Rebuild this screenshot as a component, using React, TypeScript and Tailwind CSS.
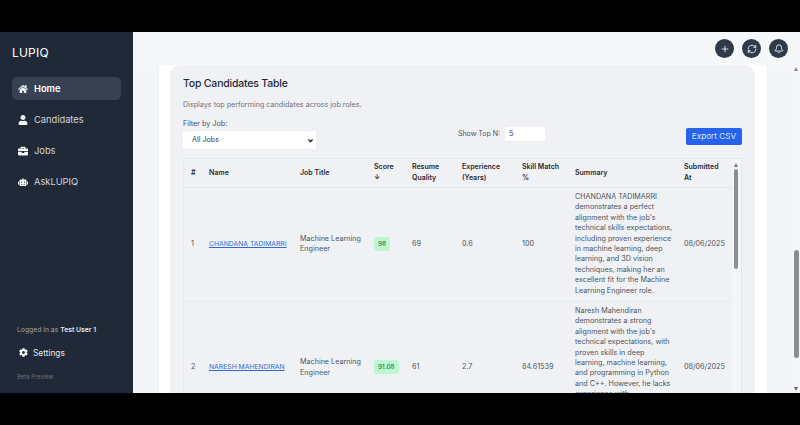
import { Plus, RefreshCw, Bell } from "lucide-react";
import { FaHome, FaUser, FaBriefcase, FaRobot, FaCog } from "react-icons/fa";

const nav = [
  { label: "Home", Icon: FaHome, active: true },
  { label: "Candidates", Icon: FaUser },
  { label: "Jobs", Icon: FaBriefcase },
  { label: "AskLUPIQ", Icon: FaRobot },
];

const columns = [
  { lines: ["#"], w: "w-[18px]" },
  { lines: ["Name"], w: "w-[91px]" },
  { lines: ["Job Title"], w: "w-[74px]" },
  { lines: ["Score", "↓"], w: "w-[38px]" },
  { lines: ["Resume", "Quality"], w: "w-[50px]" },
  { lines: ["Experience", "(Years)"], w: "w-[60px]" },
  { lines: ["Skill Match", "%"], w: "w-[53px]" },
  { lines: ["Summary"], w: "w-[109px]" },
  { lines: ["Submitted", "At"], w: "w-[56px]" },
];

const rows = [
  {
    n: 1,
    name: "CHANDANA TADIMARRI",
    score: "98",
    rq: "69",
    exp: "0.6",
    skill: "100",
    h: "h-[114px]",
    summary: [
      "CHANDANA TADIMARRI",
      "demonstrates a perfect",
      "alignment with the job's",
      "technical skills expectations,",
      "including proven experience",
      "in machine learning, deep",
      "learning, and 3D vision",
      "techniques, making her an",
      "excellent fit for the Machine",
      "Learning Engineer role.",
    ],
  },
  {
    n: 2,
    name: "NARESH MAHENDIRAN",
    score: "91.08",
    rq: "61",
    exp: "2.7",
    skill: "84.61539",
    h: "h-[133px]",
    summary: [
      "Naresh Mahendiran",
      "demonstrates a strong",
      "alignment with the job's",
      "technical expectations, with",
      "proven skills in deep",
      "learning, machine learning,",
      "and programming in Python",
      "and C++. However, he lacks",
      "experience with",
    ],
  },
];

function RoundBtn({ children }: { children: React.ReactNode }) {
  return (
    <button className="flex h-[19px] w-[19px] items-center justify-center rounded-full bg-[#2f3a4a] text-white">
      {children}
    </button>
  );
}

export default function App() {
  return (
    <div className="flex h-[425px] w-[800px] flex-col overflow-hidden bg-black font-['Inter',sans-serif]">
      <div className="h-[32px] shrink-0" />
      <div className="flex h-[361px] shrink-0">
        <aside className="flex w-[133px] shrink-0 flex-col bg-[#1f2937] px-3 text-white">
          <div className="pt-[13px] text-[12px] font-normal leading-[15px] tracking-[0.2px]">LUPIQ</div>
          <nav className="mt-[17px] flex flex-col gap-[8.3px]">
            {nav.map(({ label, Icon, active }) => (
              <div
                key={label}
                className={`flex h-[23px] items-center gap-[6px] rounded-[5px] pl-[6px] text-[9.3px] ${
                  active ? "bg-[#374151] font-semibold text-white" : "text-[#d1d5db]"
                }`}
              >
                <Icon className="h-[10px] w-[10px] text-[#f3f4f6]" />
                <span>{label}</span>
              </div>
            ))}
          </nav>
          <div className="mt-auto pb-[12px] pl-[5px]">
            <div className="text-[6.8px] leading-[10px] text-[#9ca3af]">
              Logged in as <span className="font-semibold text-[#e5e7eb]">Test User 1</span>
            </div>
            <div className="mt-[12px] flex items-center gap-[5px] pl-[2px] text-[8.3px] text-[#e5e7eb]">
              <FaCog className="h-[9px] w-[9px] text-white" />
              <span>Settings</span>
            </div>
            <div className="mt-[13px] text-[5.9px] leading-[9px] text-[#6b7280]">Beta Preview</div>
          </div>
        </aside>
        <main className="flex min-w-0 flex-1 flex-col bg-[#f3f4f6]">
          <header className="flex h-[33px] shrink-0 items-center justify-end gap-[8px] bg-[#f6f7f9] pr-[12px]">
            <RoundBtn><Plus className="h-[10px] w-[10px]" /></RoundBtn>
            <RoundBtn><RefreshCw className="h-[10px] w-[10px]" /></RoundBtn>
            <RoundBtn><Bell className="h-[10px] w-[10px]" /></RoundBtn>
          </header>
          <div className="relative flex min-h-0 flex-1 overflow-hidden bg-[#f4f5f8] pl-[25px] pr-[32px]">
            <div className="flex-1 rounded-t-[4px] border-x border-[#eceef1] bg-white pl-[11px] pr-[12px]">
              <section className="h-full rounded-t-[10px] bg-[#f0f1f4] px-[13px] pt-[11px]">
                <h2 className="text-[10.5px] font-medium leading-[15px] tracking-[-0.2px] text-[#1f2937]">Top Candidates Table</h2>
                <p className="mt-[9px] text-[7.2px] leading-[10px] text-[#6b7280]">
                  Displays top performing candidates across job roles.
                </p>
                <div className="mt-[9px] flex items-start justify-between">
                  <div className="w-[133px]">
                    <label className="block text-[7.2px] leading-[10px] text-[#4b5563]">Filter by Job:</label>
                    <div className="mt-[2px] flex h-[18px] items-center justify-between rounded-[2px] bg-white pl-[9px] pr-[2px] text-[7.2px] text-[#374151]">
                      <span>All Jobs</span>
                      <svg viewBox="0 0 10 10" className="h-[7px] w-[7px]" fill="none" stroke="#222" strokeWidth="1.8">
                        <path d="M2 3.5 5 6.5 8 3.5" />
                      </svg>
                    </div>
                  </div>
                  <div className="flex items-center gap-[5px] pl-[1px] pt-[8px]">
                    <span className="text-[7px] text-[#4b5563]">Show Top N:</span>
                    <div className="flex h-[14px] w-[40px] items-center rounded-[2px] bg-white pl-[4px] text-[7.2px] text-[#374151]">5</div>
                  </div>
                  <button className="mt-[9px] flex h-[17px] w-[56px] items-center justify-center rounded-[2px] bg-[#2563eb] text-[8.2px] text-[#dbe6ff]">
                    Export CSV
                  </button>
                </div>
                <div className="relative mt-[9px] h-[236px] overflow-hidden border-x border-t border-[#e5e7eb]">
                  <table className="w-[549px] table-fixed border-collapse text-left text-[7.2px] leading-[10.4px]">
                    <colgroup>
                      {columns.map((c) => (
                        <col key={c.lines.join(" ")} className={c.w} />
                      ))}
                    </colgroup>
                    <thead>
                      <tr className="h-[28px] border-b border-[#e5e7eb] text-[#1f2937]">
                        {columns.map((c) => (
                          <th key={c.lines.join(" ")} className="whitespace-nowrap pl-[7px] text-[7px] font-semibold">
                            {c.lines.map((line) => (
                              <div key={line}>{line}</div>
                            ))}
                          </th>
                        ))}
                      </tr>
                    </thead>
                    <tbody className="text-[#4b5563]">
                      {rows.map((r) => (
                        <tr key={r.n} className={`${r.h} border-b border-[#e8eaee]`}>
                          <td className="pl-[7px]">{r.n}</td>
                          <td className="whitespace-nowrap pl-[7px] text-[6.8px] text-[#2f6bd8] underline">{r.name}</td>
                          <td className="pl-[7px]">Machine Learning Engineer</td>
                          <td className="pl-[7px]">
                            <span className="rounded-[3px] bg-[#bbf7d0] px-[4px] py-[3px] text-[6.5px] text-[#166534]">{r.score}</span>
                          </td>
                          <td className="pl-[7px]">{r.rq}</td>
                          <td className="pl-[7px]">{r.exp}</td>
                          <td className="pl-[7px]">{r.skill}</td>
                          <td className="pl-[7px] pt-[4.5px] align-top">
                            {r.summary.map((line) => (
                              <div key={line} className="whitespace-nowrap">{line}</div>
                            ))}
                          </td>
                          <td className="pl-[7px]">08/06/2025</td>
                        </tr>
                      ))}
                    </tbody>
                  </table>
                  <div className="absolute inset-y-0 right-0 w-[9px] bg-[#f5f6f8]">
                    <div className="absolute left-[2px] top-[4px] h-0 w-0 border-x-[2.5px] border-b-[4px] border-x-transparent border-b-[#777]" />
                    <div className="absolute left-[2px] top-[10px] h-[100px] w-[4px] rounded-full bg-[#8b8e93]" />
                  </div>
                </div>
              </section>
            </div>
            <div className="absolute inset-y-0 right-0 w-[7px] bg-[#f6f7f8]">
              <div className="absolute left-[1px] top-[2px] h-0 w-0 border-x-[2.5px] border-b-[4px] border-x-transparent border-b-[#888]" />
              <div className="absolute left-[1px] top-[185px] h-[108px] w-[5px] rounded-full bg-[#8b8e93]" />
              <div className="absolute bottom-[2px] left-[1px] h-0 w-0 border-x-[2.5px] border-t-[4px] border-x-transparent border-t-[#666]" />
            </div>
          </div>
        </main>
      </div>
      <div className="h-[32px] shrink-0" />
    </div>
  );
}
